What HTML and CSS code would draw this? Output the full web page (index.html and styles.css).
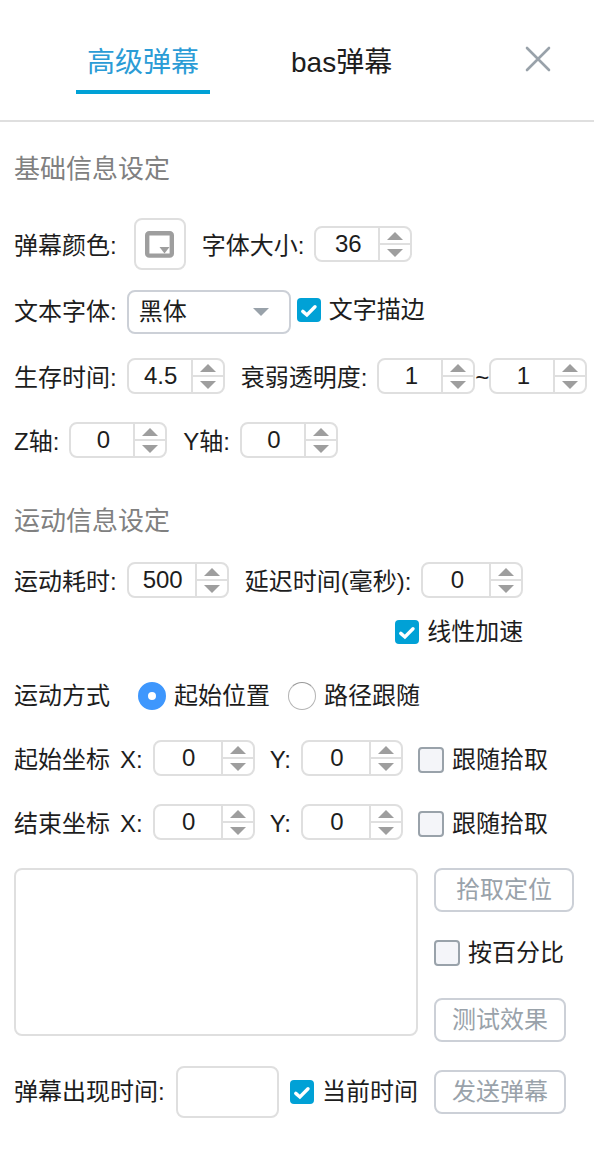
FILE: index.html
```html
<!DOCTYPE html>
<html lang="zh-CN">
<head>
<meta charset="utf-8">
<meta name="viewport" content="width=device-width, initial-scale=1">
<title>高级弹幕</title>
<link rel="stylesheet" href="styles.css">
</head>
<body>
<svg class="defs" aria-hidden="true">
  <symbol id="tick" viewBox="0 0 24 24"><path d="M5.8 13.4 9.9 17 18 8.8" fill="none" stroke="#fff" stroke-width="3.4" stroke-linecap="round"/></symbol>
  <symbol id="up" viewBox="0 0 16 8"><path d="M0 8 8 0l8 8z" fill="currentColor"/></symbol>
  <symbol id="down" viewBox="0 0 16 8"><path d="M0 0 8 8l8-8z" fill="currentColor"/></symbol>
</svg>
<header class="header">
  <nav class="tabs">
    <button class="tab tab-active" type="button">高级弹幕</button>
    <button class="tab" type="button">bas弹幕</button>
  </nav>
  <button class="close" type="button" aria-label="关闭">
    <svg width="26" height="26" viewBox="0 0 26 26"><path d="M2 2 24 24M24 2 2 24" stroke="currentColor" stroke-width="2.6" stroke-linecap="round"/></svg>
  </button>
</header>
<form class="form">
  <h2 class="heading">基础信息设定</h2>
  <div class="row row-color">
    <div class="field field-color">
      <label class="name" for="color">弹幕颜色:</label>
      <button class="color" id="color" type="button" aria-label="弹幕颜色">
        <svg width="29" height="27" viewBox="0 0 29 27"><rect x="2.2" y="2.2" width="24.6" height="22.4" rx="2" fill="none" stroke="#9e9e9e" stroke-width="4.4"/><path d="M14.5 16h10l-5 6.5z" fill="#9e9e9e"/></svg>
      </button>
    </div>
    <div class="field">
      <label class="name" for="size">字体大小:</label>
      <span class="number"><input id="size" type="number" value="36"><span class="steps"><button type="button" aria-label="增加"><svg><use href="#up"/></svg></button><button type="button" aria-label="减少"><svg><use href="#down"/></svg></button></span></span>
    </div>
  </div>
  <div class="row row-font">
    <div class="field">
      <label for="font">文本字体:</label>
      <span class="select"><select id="font"><option>黑体</option></select><svg><use href="#down"/></svg></span>
    </div>
    <label class="check check-raised"><span class="box"><input type="checkbox" checked><svg><use href="#tick"/></svg></span>文字描边</label>
  </div>
  <div class="row row-life">
    <div class="field">
      <label class="name" for="life">生存时间:</label>
      <span class="number"><input id="life" type="number" step="0.1" value="4.5"><span class="steps"><button type="button" aria-label="增加"><svg><use href="#up"/></svg></button><button type="button" aria-label="减少"><svg><use href="#down"/></svg></button></span></span>
    </div>
    <div class="field">
      <label class="name" for="fade">衰弱透明度:</label>
      <div class="range">
        <span class="number"><input id="fade" type="number" value="1"><span class="steps"><button type="button" aria-label="增加"><svg><use href="#up"/></svg></button><button type="button" aria-label="减少"><svg><use href="#down"/></svg></button></span></span>
        <span class="name">~</span>
        <span class="number"><input type="number" value="1" aria-label="结束透明度"><span class="steps"><button type="button" aria-label="增加"><svg><use href="#up"/></svg></button><button type="button" aria-label="减少"><svg><use href="#down"/></svg></button></span></span>
      </div>
    </div>
  </div>
  <div class="row">
    <div class="field">
      <label class="name" for="axis-z">Z轴:</label>
      <span class="number"><input id="axis-z" type="number" value="0"><span class="steps"><button type="button" aria-label="增加"><svg><use href="#up"/></svg></button><button type="button" aria-label="减少"><svg><use href="#down"/></svg></button></span></span>
    </div>
    <div class="field">
      <label class="name" for="axis-y">Y轴:</label>
      <span class="number"><input id="axis-y" type="number" value="0"><span class="steps"><button type="button" aria-label="增加"><svg><use href="#up"/></svg></button><button type="button" aria-label="减少"><svg><use href="#down"/></svg></button></span></span>
    </div>
  </div>

  <h2 class="heading heading-motion">运动信息设定</h2>
  <div class="timing">
    <div class="row">
      <div class="field">
        <label class="name" for="duration">运动耗时:</label>
        <span class="number number-wide"><input id="duration" type="number" value="500"><span class="steps"><button type="button" aria-label="增加"><svg><use href="#up"/></svg></button><button type="button" aria-label="减少"><svg><use href="#down"/></svg></button></span></span>
      </div>
      <div class="field">
        <label class="name" for="delay">延迟时间(毫秒):</label>
        <span class="number number-wide"><input id="delay" type="number" value="0"><span class="steps"><button type="button" aria-label="增加"><svg><use href="#up"/></svg></button><button type="button" aria-label="减少"><svg><use href="#down"/></svg></button></span></span>
      </div>
    </div>
    <label class="check"><span class="box"><input type="checkbox" checked><svg><use href="#tick"/></svg></span>线性加速</label>
  </div>
  <div class="row row-mode" role="radiogroup" aria-labelledby="mode">
    <span class="mode-name" id="mode">运动方式</span>
    <label class="check"><input class="radio" type="radio" name="mode" checked>起始位置</label>
    <label class="check"><input class="radio" type="radio" name="mode">路径跟随</label>
  </div>
  <div class="row row-point row-start">
    <div class="field">
      <span class="name">起始坐标</span>
      <label class="name" for="start-x">X:</label>
      <span class="number number-wide"><input id="start-x" type="number" value="0"><span class="steps"><button type="button" aria-label="增加"><svg><use href="#up"/></svg></button><button type="button" aria-label="减少"><svg><use href="#down"/></svg></button></span></span>
    </div>
    <div class="field">
      <label class="name" for="start-y">Y:</label>
      <span class="number number-wide"><input id="start-y" type="number" value="0"><span class="steps"><button type="button" aria-label="增加"><svg><use href="#up"/></svg></button><button type="button" aria-label="减少"><svg><use href="#down"/></svg></button></span></span>
    </div>
    <label class="check name"><span class="box"><input type="checkbox"><svg><use href="#tick"/></svg></span>跟随拾取</label>
  </div>
  <div class="row row-point">
    <div class="field">
      <span class="name">结束坐标</span>
      <label class="name" for="end-x">X:</label>
      <span class="number number-wide"><input id="end-x" type="number" value="0"><span class="steps"><button type="button" aria-label="增加"><svg><use href="#up"/></svg></button><button type="button" aria-label="减少"><svg><use href="#down"/></svg></button></span></span>
    </div>
    <div class="field">
      <label class="name" for="end-y">Y:</label>
      <span class="number number-wide"><input id="end-y" type="number" value="0"><span class="steps"><button type="button" aria-label="增加"><svg><use href="#up"/></svg></button><button type="button" aria-label="减少"><svg><use href="#down"/></svg></button></span></span>
    </div>
    <label class="check name"><span class="box"><input type="checkbox"><svg><use href="#tick"/></svg></span>跟随拾取</label>
  </div>
  <div class="compose">
    <textarea class="message" aria-label="弹幕内容"></textarea>
    <div class="side">
      <button class="action action-pick" type="button">拾取定位</button>
      <label class="check check-raised"><span class="box"><input type="checkbox"><svg><use href="#tick"/></svg></span>按百分比</label>
      <button class="action" type="button">测试效果</button>
    </div>
    <div class="send">
      <label for="when">弹幕出现时间:</label>
      <input class="when" id="when" type="text">
      <label class="check"><span class="box"><input type="checkbox" checked><svg><use href="#tick"/></svg></span>当前时间</label>
    </div>
    <button class="action action-send" type="button">发送弹幕</button>
  </div>
</form>
</body>
</html>
```
FILE: styles.css
```css
* {
  box-sizing: border-box;
}

body {
  margin: 0;
  background: #fff;
  color: #1d1d1d;
  font: 24px/36px "Liberation Sans", "Noto Sans CJK SC", sans-serif;
}

button,
input,
select,
textarea {
  margin: 0;
  padding: 0;
  border: 0;
  background: none;
  color: inherit;
  font: inherit;
}

.defs {
  display: none;
}

.header {
  display: flex;
  justify-content: space-between;
  align-items: flex-start;
  height: 122px;
  padding: 32px 43px 0 76px;
  border-bottom: 2px solid #dfdfdf;
}

.tabs {
  display: flex;
  gap: 70px;
}

.tab {
  height: 62px;
  padding: 4px 11px 0;
  border-bottom: 4px solid transparent;
  font-size: 28px;
  white-space: nowrap;
}

.tab-active {
  border-color: #00a1d6;
  color: #2b9cd6;
}

.close {
  display: flex;
  margin-top: 14px;
  color: #99a2aa;
}

.form {
  padding: 29px 0 32px 14px;
}

.heading {
  margin: 0;
  color: #808080;
  font-size: 26px;
  font-weight: 400;
}

.heading-motion {
  margin-top: 45px;
}

.row {
  display: flex;
  align-items: center;
  gap: 16px;
  margin-top: 28px;
  white-space: nowrap;
}

.row-color {
  margin-top: 31px;
}

.row-font {
  gap: 6px;
  margin-top: 20px;
}

.row-life {
  margin-top: 24px;
}

.timing .row {
  margin-top: 23px;
}

.row-point {
  gap: 15px;
}

.row-start {
  margin-top: 26px;
}

.field {
  display: flex;
  align-items: center;
  gap: 10px;
}

.name {
  padding-top: 4px;
  line-height: 32px;
}

.field-color {
  gap: 17px;
}

.range {
  display: flex;
  align-items: center;
}

.color {
  display: flex;
  align-items: center;
  justify-content: center;
  width: 52px;
  height: 52px;
  border: 2px solid #dfdfdf;
  border-radius: 8px;
}

.number {
  display: flex;
  width: 98px;
  height: 36px;
  border: 2px solid #dfdfdf;
  border-radius: 8px;
}

.number-wide {
  width: 102px;
}

.number input {
  flex: 1;
  min-width: 0;
  padding-left: 2px;
  text-align: center;
  appearance: textfield;
}

.number input::-webkit-inner-spin-button {
  display: none;
}

.steps {
  display: flex;
  flex-direction: column;
  width: 32px;
  border-left: 2px solid #dfdfdf;
  color: #9e9e9e;
}

.steps button {
  display: flex;
  flex: 1;
  align-items: center;
  justify-content: center;
}

.steps button + button {
  border-top: 2px solid #dfdfdf;
}

.steps svg {
  width: 16px;
  height: 8px;
}

.select {
  display: grid;
  align-items: center;
  width: 164px;
  height: 44px;
}

.select select,
.select svg {
  grid-area: 1 / 1;
}

.select select {
  width: 100%;
  height: 100%;
  padding-left: 10px;
  border: 2px solid #ccd0d7;
  border-radius: 8px;
  appearance: none;
}

.select svg {
  justify-self: end;
  width: 16px;
  height: 8px;
  margin-right: 22px;
  color: #99a2aa;
  pointer-events: none;
}

.check {
  display: flex;
  align-items: center;
  gap: 8px;
  white-space: nowrap;
}

.check-raised {
  padding-bottom: 4px;
}

.box {
  display: grid;
  place-items: center;
}

.box input,
.box svg {
  grid-area: 1 / 1;
}

.box input {
  width: 26px;
  height: 26px;
  border: 2px solid #99a2aa;
  border-radius: 4px;
  background: #f4f5f9;
  appearance: none;
}

.box input:checked {
  width: 24px;
  height: 24px;
  border: 0;
  background: #00a1d6;
}

.box svg {
  width: 24px;
  height: 24px;
  pointer-events: none;
}

.box input:not(:checked) + svg {
  visibility: hidden;
}

.timing {
  display: flex;
  flex-direction: column;
  align-items: flex-end;
  gap: 16px;
  width: fit-content;
}

.row-mode {
  gap: 18px;
}

.mode-name {
  margin-right: 10px;
}

.radio {
  width: 28px;
  height: 28px;
  border: 1px solid #b4b4b4;
  border-top-color: #999;
  border-radius: 50%;
  appearance: none;
}

.radio:checked {
  border: 10px solid #3e97fd;
  background: #fff;
}

.compose {
  display: grid;
  grid-template-columns: 1fr 140px;
  gap: 24px 16px;
  margin-top: 28px;
  padding-right: 20px;
}

.message {
  height: 168px;
  padding: 8px 12px;
  border: 2px solid #dfdfdf;
  border-radius: 8px;
  resize: none;
}

.side {
  display: flex;
  flex-direction: column;
  align-items: flex-start;
  justify-content: space-between;
  height: 174px;
}

.action {
  width: 132px;
  height: 44px;
  border: 2px solid #ccd0d7;
  border-radius: 8px;
  color: #99a2aa;
}

.action-pick {
  width: 140px;
}

.action-send {
  align-self: center;
}

.send {
  display: flex;
  align-items: center;
  gap: 11px;
  min-width: 0;
  white-space: nowrap;
}

.when {
  flex: 0 1 104px;
  min-width: 0;
  height: 52px;
  padding: 0 8px;
  border: 2px solid #dfdfdf;
  border-radius: 8px;
}
```
